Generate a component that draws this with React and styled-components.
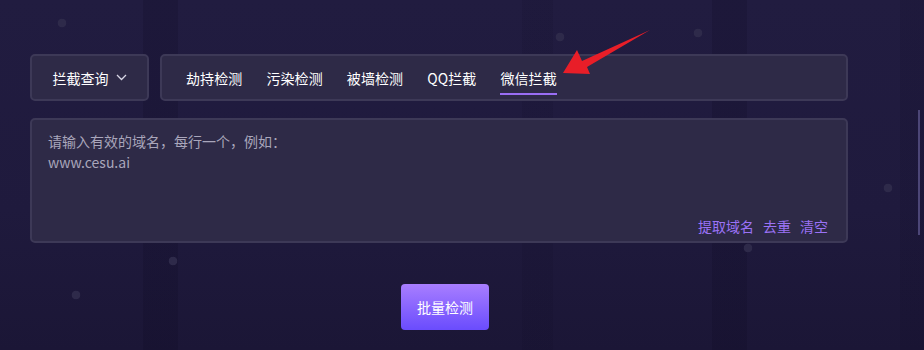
import React from "react";
import styled, { createGlobalStyle, css } from "styled-components";

const GlobalStyle = createGlobalStyle`
  html, body {
    margin: 0;
    padding: 0;
    background: #1e1a3b;
  }
  * { box-sizing: border-box; }
`;

const font = `"Noto Sans CJK SC", "Noto Sans", sans-serif`;

const dot = (x, y) => `radial-gradient(circle at ${x}px ${y}px, #2e2a4a 0 4px, transparent 4.6px)`;

const Page = styled.div`
  position: relative;
  width: 924px;
  height: 350px;
  overflow: hidden;
  font-family: ${font};
  background:
    ${dot(62, 23)}, ${dot(560, 37)}, ${dot(698, 33)}, ${dot(173, 261)},
    ${dot(76, 295)}, ${dot(888, 188)}, ${dot(748, 248)},
    linear-gradient(90deg,
      transparent 0 143px, rgba(10, 6, 30, 0.18) 143px 178px,
      transparent 178px 522px, rgba(10, 6, 30, 0.1) 522px 553px,
      transparent 553px 712px, rgba(10, 6, 30, 0.18) 712px 747px,
      transparent 747px 900px, rgba(10, 6, 30, 0.12) 900px),
    linear-gradient(180deg, #211c40 0%, #1f1a3d 60%, #1b1636 100%);
  padding: 54px 0 0 30px;
`;

const Content = styled.div`
  width: 818px;
  display: flex;
  flex-direction: column;
`;

const TopRow = styled.div`
  display: flex;
  gap: 11px;
`;

const panel = css`
  background: #2e2a47;
  border: 2px solid #3d3957;
  border-radius: 5px;
`;

const Dropdown = styled.div`
  ${panel};
  width: 119px;
  height: 47px;
  display: flex;
  align-items: center;
  justify-content: center;
  gap: 7px;
  color: #ffffff;
  font-size: 14px;
`;

const TabBar = styled.div`
  ${panel};
  flex: 1;
  height: 47px;
  display: flex;
  align-items: stretch;
  gap: 24px;
  padding-left: 24px;
`;

const Tab = styled.div`
  position: relative;
  display: flex;
  align-items: center;
  color: #ffffff;
  font-size: 14px;
  letter-spacing: 0.1px;
  white-space: nowrap;
  ${(p) =>
    p.$active &&
    css`
      &::after {
        content: "";
        position: absolute;
        left: 0;
        right: 0;
        bottom: 4px;
        height: 2px;
        background: #9a6ef4;
      }
    `}
`;

const TextBox = styled.div`
  ${panel};
  margin-top: 17px;
  height: 125px;
  display: flex;
  flex-direction: column;
  justify-content: space-between;
  padding: 11px 18px 5px 16px;
`;

const Placeholder = styled.div`
  color: #a9a6bb;
  font-size: 14px;
  line-height: 21px;
`;

const Actions = styled.div`
  display: flex;
  justify-content: flex-end;
  gap: 9px;
`;

const ActionLink = styled.span`
  color: #9b72f6;
  font-size: 14px;
  line-height: 20px;
`;

const ButtonRow = styled.div`
  display: flex;
  justify-content: center;
  padding-left: 12px;
  margin-top: 41px;
`;

const PrimaryButton = styled.button`
  width: 88px;
  height: 46px;
  border: none;
  border-radius: 4px;
  background: linear-gradient(180deg, #a87eff 0%, #6a4cfd 100%);
  color: #ffffff;
  font-family: ${font};
  font-size: 14px;
`;

const Scrollbar = styled.div`
  position: absolute;
  left: 918px;
  top: 110px;
  width: 2px;
  height: 125px;
  background: #4c4677;
`;

const Annotation = styled.svg`
  position: absolute;
  left: 0;
  top: 0;
  pointer-events: none;
`;

const tabs = ["劫持检测", "污染检测", "被墙检测", "QQ拦截", "微信拦截"];

export default function App() {
  return (
    <Page>
      <GlobalStyle />
      <Content>
        <TopRow>
          <Dropdown>
            拦截查询
            <svg width="11" height="7" viewBox="0 0 11 7">
              <path d="M1 1l4.5 4.5L10 1" fill="none" stroke="#d8d6e6" strokeWidth="1.3" />
            </svg>
          </Dropdown>
          <TabBar>
            {tabs.map((t) => (
              <Tab key={t} $active={t === "微信拦截"}>
                {t}
              </Tab>
            ))}
          </TabBar>
        </TopRow>
        <TextBox>
          <Placeholder>
            请输入有效的域名，每行一个，例如：
            <br />
            www.cesu.ai
          </Placeholder>
          <Actions>
            <ActionLink>提取域名</ActionLink>
            <ActionLink>去重</ActionLink>
            <ActionLink>清空</ActionLink>
          </Actions>
        </TextBox>
        <ButtonRow>
          <PrimaryButton>批量检测</PrimaryButton>
        </ButtonRow>
      </Content>
      <Scrollbar />
      <Annotation width="924" height="350">
        <polygon points="563,73 577,50 582,61 650,30 587,67 590,74" fill="#e81e28" />
      </Annotation>
    </Page>
  );
}
